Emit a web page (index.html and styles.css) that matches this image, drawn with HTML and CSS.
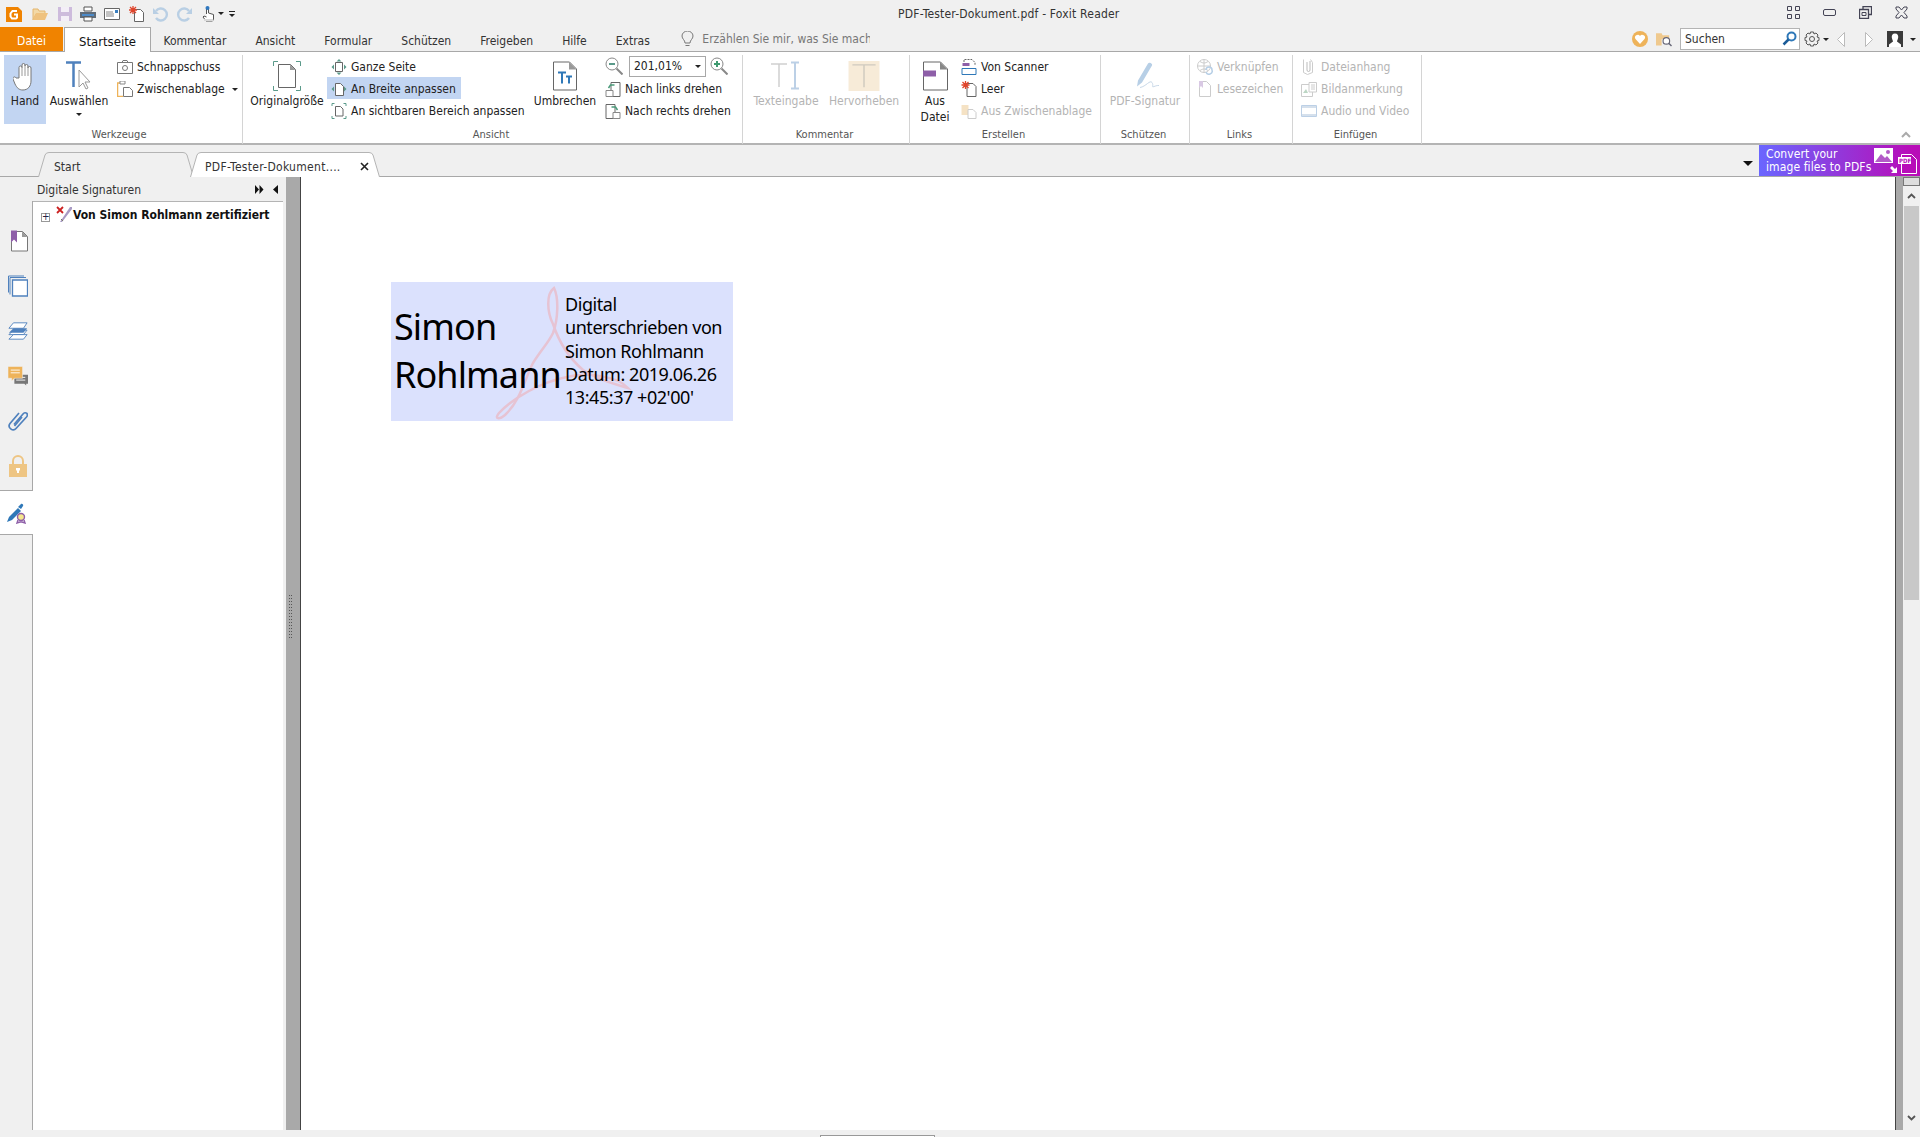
FILE: index.html
```html
<!DOCTYPE html>
<html lang="de">
<head>
    <meta charset="UTF-8">
    <meta name="viewport" content="width=device-width, initial-scale=1.0">
    <title>PDF-Tester-Dokument.pdf - Foxit Reader</title>
    <link rel="stylesheet" href="styles.css">
</head>
<body>
<div class="app">

    <!-- Titelleiste -->
    <div class="titlebar">
        <div class="qat">
            <svg class="qi q-logo" viewBox="0 0 16 16"><path d="M0 1h12l4 4v11H0z" fill="#f08300"/><path d="M11 5H6.500L4.500 7.500v3L6 12.500h4l1-1V8.500H8" fill="none" stroke="#fff" stroke-width="2"/></svg>
            <svg class="qi q-open" viewBox="0 0 16 16"><path d="M1 3h5l1 2h6v3H4L1 14z" fill="#f3d9a6" stroke="#e5b66c"/><path d="M4 7h12l-3 7H1z" fill="#efc27e"/></svg>
            <svg class="qi q-save" viewBox="0 0 16 16"><path d="M1 1h14v14H1z" fill="#cdbbdc"/><path d="M4 1h8v5H4zM4 10h8v5H4z" fill="#f3eef7"/></svg>
            <svg class="qi q-print" viewBox="0 0 16 16"><path d="M4 1h8v4H4z" fill="#fff" stroke="#555"/><path d="M0 6h16v6H0z" fill="#5f6b78"/><path d="M2 8h12v2H2z" fill="#4c8ac8"/><path d="M4 11h8v4H4z" fill="#fff" stroke="#555"/></svg>
            <svg class="qi q-mail" viewBox="0 0 16 16"><path d="M.5 2.500h15v11H.5z" fill="#fff" stroke="#666"/><path d="M2 6h7M2 8h8M2 10h8" stroke="#888"/><path d="M11 4h3v3h-3z" fill="#3a7fc0"/></svg>
            <svg class="qi q-new" viewBox="0 0 16 16"><path d="M5.500 3.500h6l3 3v9h-9z" fill="#fff" stroke="#666"/><path d="M4 0v8M0 4h8M1 1l6 6M7 1 1 7" stroke="#e0452c" stroke-width="1.300"/></svg>
            <svg class="qi q-undo" viewBox="0 0 16 16"><path d="M3 5a6 6 0 1 1 0 7" fill="none" stroke="#b9cfe4" stroke-width="2.400"/><path d="M0 2v6h6z" fill="#b9cfe4"/></svg>
            <svg class="qi q-redo" viewBox="0 0 16 16"><path d="M13 5a6 6 0 1 0 0 7" fill="none" stroke="#b9cfe4" stroke-width="2.400"/><path d="M16 2v6h-6z" fill="#b9cfe4"/></svg>
            <svg class="qi q-hand" viewBox="0 0 16 16"><path d="M5.500 8V2.500a1 1 0 0 1 2 0V7l5 1.500V13l-1 2H5l-3-4 1-1 2.500 1" fill="#fff" stroke="#555"/><circle cx="6.500" cy="2" r="2" fill="#2f78c0"/><path d="M3 13h9v2H3z" fill="#d8d8d8"/></svg>
            <span class="caret q-caret"></span>
            <span class="q-custom"></span>
        </div>
        <div class="doc-title">PDF-Tester-Dokument.pdf - Foxit Reader</div>
        <div class="winbtns">
            <svg class="wi" viewBox="0 0 13 13"><path d="M.5.500h4v4h-4zM8.500.500h4v4h-4zM.5 8.500h4v4h-4zM8.500 8.500h4v4h-4z" fill="none" stroke="#445"/></svg>
            <svg class="wi" viewBox="0 0 13 13"><rect x=".5" y="3.500" width="12" height="6" rx="1.500" fill="none" stroke="#445"/></svg>
            <svg class="wi" viewBox="0 0 13 13"><path d="M4 3V.5h8.500v8H10M.5 3.500H9.500v9h-9z" fill="none" stroke="#445" stroke-width="1.300"/><path d="M3 6.500h4v3H3z" fill="none" stroke="#445"/></svg>
            <svg class="wi" viewBox="0 0 13 13"><path d="M1 1h3l2.500 3L9 1h3v2L9 6.500l3 3.500v2H9L6.500 9 4 12H1v-2l3-3.500L1 3z" fill="none" stroke="#445"/></svg>
        </div>
    </div>

    <!-- Registerkarten -->
    <div class="tabbar">
        <div class="tab tab-file">Datei</div>
        <div class="tab tab-active">Startseite</div>
        <div class="tab">Kommentar</div>
        <div class="tab">Ansicht</div>
        <div class="tab">Formular</div>
        <div class="tab">Schützen</div>
        <div class="tab">Freigeben</div>
        <div class="tab">Hilfe</div>
        <div class="tab">Extras</div>
        <svg class="bulb" viewBox="0 0 13 17"><path d="M4 12c0-3-3-4-3-7a5.500 5 0 0 1 11 0c0 3-3 4-3 7zM4.500 14.500h4" fill="none" stroke="#777"/></svg>
        <div class="tell">Erzählen Sie mir, was Sie mache</div>
        <div class="tab-tools">
            <svg class="ti" viewBox="0 0 16 16"><circle cx="8" cy="8" r="8" fill="#eeb35a"/><path d="M8 13 3.500 8a2.500 2.500 0 0 1 4.500-3 2.500 2.500 0 0 1 4.500 3z" fill="#fff"/></svg>
            <svg class="ti" viewBox="0 0 17 16"><path d="M0 2h6l1 2h7v4H6v7H0z" fill="#efc98e"/><circle cx="11" cy="10" r="3.500" fill="#fff" stroke="#667" stroke-width="1.200"/><path d="m13.500 12.500 3 3" stroke="#667" stroke-width="1.500"/></svg>
            <div class="search">Suchen
                <svg class="search-icon" viewBox="0 0 15 15"><circle cx="9.500" cy="5.500" r="4" fill="#fff" stroke="#2f78b8" stroke-width="2"/><path d="m6.500 8.500-5 5" stroke="#1c5c98" stroke-width="2.500"/></svg>
            </div>
            <svg class="ti gear" viewBox="0 0 16 16"><circle cx="8" cy="8" r="2.500" fill="none" stroke="#555"/><path d="M6.500 1h3l.5 2 2-1 2 2-1 2 2 .5v3l-2 .5 1 2-2 2-2-1-.5 2h-3L6 13l-2 1-2-2 1-2-2-.5v-3L3 6 2 4l2-2 2 1z" fill="none" stroke="#555"/></svg>
            <span class="caret"></span>
            <svg class="nav nav-back" viewBox="0 0 8 15"><path d="M7.500.5v14L.5 7.500z" fill="#fff" stroke="#bbb"/></svg>
            <svg class="nav nav-next" viewBox="0 0 8 15"><path d="M.5.5v14l7-7z" fill="#fff" stroke="#bbb"/></svg>
            <svg class="ti user" viewBox="0 0 16 16"><path d="M0 0h16v16H0z" fill="#3a3a3a"/><path d="M8 2.500c2.500 0 3.500 2 3.200 4-.3 2-1.200 3-1.200 4l4 3v2.500H2V13.500l4-3c0-1-.9-2-1.200-4-.3-2 .7-4 3.200-4z" fill="#fff"/></svg>
            <span class="caret"></span>
        </div>
    </div>

    <!-- Menüband -->
    <div class="ribbon">
        <section class="group g-tools">
            <div class="group-body">
                <div class="big big-on b-hand">
                    <svg class="big-icon" width="24" height="30" viewBox="0 0 24 30"><path d="M6 17V6.500a1.500 1.500 0 0 1 3 0V4a1.500 1.500 0 0 1 3 0v1a1.500 1.500 0 0 1 3 0v2a1.500 1.500 0 0 1 3 0v13c0 5-3 9-8 9-4 0-6-2-8-6l-2-5c-.5-2 2-3 3-1z" fill="#fff" stroke="#777"/><path d="M9 6v9M12 4v11M15 5v10" stroke="#999"/></svg>
                    <span>Hand</span>
                </div>
                <div class="big b-select">
                    <svg class="big-icon" width="26" height="30" viewBox="0 0 26 30"><path d="M0 1.500h15M7.500 1.500V26" stroke="#4f81bd" stroke-width="2.500"/><path d="M13 9v17l4-4 3 6 2-1-3-6h5z" fill="#fff" stroke="#999"/></svg>
                    <span>Auswählen</span>
                    <span class="caret big-caret"></span>
                </div>
                <div class="rows r-tools">
                    <div class="row"><svg class="si" viewBox="0 0 16 14"><path d="M.5 2.500h15v11H.5zM5 2.500l1-2h4l1 2" fill="#fff" stroke="#777"/><circle cx="8" cy="8" r="2.500" fill="none" stroke="#777"/></svg>Schnappschuss</div>
                    <div class="row"><svg class="si" viewBox="0 0 16 16"><path d="M6 2H.5v13.500H6" fill="none" stroke="#eeb35a" stroke-width="1.500"/><path d="M3 0h5v3H3z" fill="#fff" stroke="#888"/><path d="M6.500 6.500h6l3 3v6h-9z" fill="#fff" stroke="#777"/></svg>Zwischenablage<span class="caret row-caret"></span></div>
                </div>
            </div>
            <div class="group-label">Werkzeuge</div>
        </section>

        <section class="group g-view">
            <div class="group-body">
                <div class="big b-orig">
                    <svg class="big-icon" width="28" height="30" viewBox="0 0 28 30"><path d="M.5 5V.5H5M23 .5h4.500V5M.5 25v4.500H5M23 29.500h4.500V25" fill="none" stroke="#5b9a8a"/><path d="M5.500 3.500h12l5 5v18h-17z" fill="#fff" stroke="#666"/><path d="M17 3.500l5.500 5.500H17z" fill="#999"/></svg>
                    <span>Originalgröße</span>
                </div>
                <div class="rows r-view">
                    <div class="row"><svg class="si" viewBox="0 0 15 16"><path d="M4 3.500h7v9H4z" fill="#fff" stroke="#666"/><path d="M7.500 0 5 2.500h5zM7.500 16 5 13.500h5zM0 8l2.500-2.500v5zM15 8l-2.500-2.500v5z" fill="#5b9a8a"/></svg>Ganze Seite</div>
                    <div class="row row-on"><svg class="si" viewBox="0 0 15 16"><path d="M4 2.500h5l3 3v9H4z" fill="#fff" stroke="#666"/><path d="M0 8l2.500-2.500v5zM15 8l-2.500-2.500v5z" fill="#5b9a8a"/></svg>An Breite anpassen</div>
                    <div class="row"><svg class="si" viewBox="0 0 15 16"><path d="M.5 3V.5H3M12 .5h2.500V3M.5 13v2.500H3M12 15.500h2.500V13" fill="none" stroke="#5b9a8a"/><path d="M4 3.500h5l2.500 2.500v7H4z" fill="#fff" stroke="#666"/></svg>An sichtbaren Bereich anpassen</div>
                </div>
                <div class="big b-wrap">
                    <svg class="big-icon" width="24" height="29" viewBox="0 0 24 29"><path d="M.5.500h16l7 7v21H.5z" fill="#fff" stroke="#666"/><path d="M16 .5l7.500 7.500H16z" fill="#999"/><path d="M5 11h8M9 11v11M13 15h6M16 15v7" stroke="#2f78b8" stroke-width="2" fill="none"/></svg>
                    <span>Umbrechen</span>
                </div>
                <div class="rows r-zoom">
                    <div class="row zoom-row">
                        <svg class="zi" viewBox="0 0 18 18"><circle cx="7" cy="7" r="6" fill="#fff" stroke="#888"/><path d="M4 7h6" stroke="#5b9a8a" stroke-width="2"/><path d="m11.500 11.500 6 6" stroke="#888" stroke-width="2"/></svg>
                        <div class="zoom-box">201,01%<span class="caret"></span></div>
                        <svg class="zi" viewBox="0 0 18 18"><circle cx="7" cy="7" r="6" fill="#fff" stroke="#888"/><path d="M4 7h6M7 4v6" stroke="#3f9a70" stroke-width="2"/><path d="m11.500 11.500 6 6" stroke="#888" stroke-width="2"/></svg>
                    </div>
                    <div class="row"><svg class="si" viewBox="0 0 15 16"><path d="M5.500 1.500h9v14h-9z" fill="#fff" stroke="#666"/><path d="M.5 9.500h7v6h-7z" fill="#fff" stroke="#888"/><path d="M9 4H5L3 7" fill="none" stroke="#4a9a7a" stroke-width="1.500"/></svg>Nach links drehen</div>
                    <div class="row"><svg class="si" viewBox="0 0 15 16"><path d="M.5 1.500h9v14h-9z" fill="#fff" stroke="#666"/><path d="M7.500 9.500h7v6h-7z" fill="#fff" stroke="#888"/><path d="M6 4h4l2 3" fill="none" stroke="#4a9a7a" stroke-width="1.500"/></svg>Nach rechts drehen</div>
                </div>
            </div>
            <div class="group-label">Ansicht</div>
        </section>

        <section class="group g-comment">
            <div class="group-body">
                <div class="big off b-text">
                    <svg class="big-icon" width="30" height="30" viewBox="0 0 30 30"><path d="M0 3h16M8 3v23" stroke="#cfcfcf" stroke-width="1.500"/><path d="M20 1.500h8M20 27.500h8M24 1.500v26" stroke="#bcd0e6" stroke-width="2"/></svg>
                    <span>Texteingabe</span>
                </div>
                <div class="big off b-mark">
                    <svg class="big-icon" width="32" height="31" viewBox="0 0 32 31"><path d="M0 0h32v31H0z" fill="#f7ebd8"/><path d="M4 4h24M16 4v23" stroke="#cfcabf" stroke-width="1.500"/></svg>
                    <span>Hervorheben</span>
                </div>
            </div>
            <div class="group-label">Kommentar</div>
        </section>

        <section class="group g-create">
            <div class="group-body">
                <div class="big b-file">
                    <svg class="big-icon" width="25" height="29" viewBox="0 0 25 29"><path d="M.5.500h17l7 7v21H.5z" fill="#fff" stroke="#666"/><path d="M17 .5l7.500 7.500H17z" fill="#888"/><path d="M0 9h13v6H0z" fill="#8e5fa8"/></svg>
                    <span>Aus<br>Datei</span>
                </div>
                <div class="rows r-create">
                    <div class="row"><svg class="si" viewBox="0 0 15 16"><path d="M2.500 6V.5h8l3 3V6" fill="none" stroke="#666" stroke-dasharray="2 1"/><path d="M1 4h7v3H1z" fill="#8e5fa8"/><path d="M.5 9.500h14v6H.5z" fill="#fff" stroke="#2f78b8"/></svg>Von Scanner</div>
                    <div class="row"><svg class="si" viewBox="0 0 15 16"><path d="M5.500 2.500h6l3 3v10h-9z" fill="#fff" stroke="#666"/><path d="M4 0v8M0 4h8M1 1l6 6M7 1 1 7" stroke="#e0452c" stroke-width="1.300"/></svg>Leer</div>
                    <div class="row off"><svg class="si" viewBox="0 0 15 16"><path d="M0 2h7v10H0z" fill="#f5e2c4"/><path d="M6.500 6.500h5l3 3v6h-8z" fill="#fff" stroke="#ccc"/></svg>Aus Zwischenablage</div>
                </div>
            </div>
            <div class="group-label">Erstellen</div>
        </section>

        <section class="group g-protect">
            <div class="group-body">
                <div class="big off b-sign">
                    <svg class="big-icon" width="27" height="29" viewBox="0 0 27 29"><path d="M6 19 16 2c1-2 5 0 4 2L10 21l-5 4z" fill="#b7cfe6"/><path d="M8 26c6-1 10-8 12-5s-1 5 2 4 3-1 5-1" fill="none" stroke="#c8d8e8"/></svg>
                    <span>PDF-Signatur</span>
                </div>
            </div>
            <div class="group-label">Schützen</div>
        </section>

        <section class="group g-links">
            <div class="group-body">
                <div class="rows r-links">
                    <div class="row off"><svg class="si" viewBox="0 0 16 16"><circle cx="7" cy="7" r="6.500" fill="none" stroke="#ccc"/><path d="M.5 7h13M7 .5v13M3 2.500c3 2 5 2 8 0M3 11.500c3-2 5-2 8 0" fill="none" stroke="#ccc"/><path d="M9 11a3 3 0 0 1 6 0 3 3 0 0 1-6 2" fill="none" stroke="#b7cfe6" stroke-width="1.500"/></svg>Verknüpfen</div>
                    <div class="row off"><svg class="si" viewBox="0 0 16 16"><path d="M2.500.5h7l4 4v11h-11z" fill="#fff" stroke="#ccc"/><path d="M2 0h4v7L4 5 2 7z" fill="#d9c9e4"/></svg>Lesezeichen</div>
                </div>
            </div>
            <div class="group-label">Links</div>
        </section>

        <section class="group g-insert">
            <div class="group-body">
                <div class="rows r-insert">
                    <div class="row off"><svg class="si" viewBox="0 0 16 16"><path d="M2.500.5v13l4 2 5-2V3.500l-2-3" fill="none" stroke="#ccc"/><path d="M6 3v8a1.500 1.500 0 0 0 3 0V2" fill="none" stroke="#bbb"/></svg>Dateianhang</div>
                    <div class="row off"><svg class="si" viewBox="0 0 16 16"><path d="M.5 3.500h11v12H.5z" fill="#fff" stroke="#ccc"/><path d="M2 12l3-4 2 4z" fill="#bcd6c4"/><path d="M8 1.500h7.500V11H8z" fill="#fff" stroke="#ccc"/><path d="M10 4h4M10 6h4M10 8h4" stroke="#ccc"/></svg>Bildanmerkung</div>
                    <div class="row off"><svg class="si" viewBox="0 0 16 16"><path d="M.5 2.500h15v11H.5z" fill="#fff" stroke="#bcd0e6"/><path d="M1 3h14v2H1zM1 11h14v2H1z" fill="#d5e0ec"/></svg>Audio und Video</div>
                </div>
            </div>
            <div class="group-label">Einfügen</div>
        </section>

        <svg class="collapse" viewBox="0 0 10 7"><path d="M1 6l4-4 4 4" fill="none" stroke="#aaa" stroke-width="2"/></svg>
    </div>

    <!-- Dokument-Reiter -->
    <div class="docbar">
        <div class="doc-tab dt-start">
            <svg class="dt-shape" viewBox="0 0 156 25" preserveAspectRatio="none"><path d="M.5 25 7 3Q8 .5 11 .5H145Q148 .5 149 3L155.500 25" fill="#f0f0f0" stroke="#b4b4b4"/></svg>
            <span class="dt-text">Start</span>
        </div>
        <div class="doc-tab dt-on">
            <svg class="dt-shape" viewBox="0 0 190 25" preserveAspectRatio="none"><path d="M.5 25 7 3Q8 .5 11 .5H179Q182 .5 183 3L189.500 25" fill="#fff" stroke="#b4b4b4"/></svg>
            <span class="dt-text">PDF-Tester-Dokument....</span>
            <svg class="dt-close" viewBox="0 0 9 9"><path d="M1 1l7 7M8 1 1 8" stroke="#222" stroke-width="1.600"/></svg>
        </div>
        <span class="caret doc-caret"></span>
        <div class="convert">
            <div class="convert-text">Convert your<br>image files to PDFs</div>
            <svg class="convert-icon" width="46" height="28" viewBox="0 0 46 28"><path d="M0 1h19v15H0z" fill="#fff"/><path d="M1 15l6-8 4 4 2-2 5 6z" fill="#b35ac8"/><circle cx="14" cy="5" r="2" fill="#b35ac8"/><path d="M27.500 7.500h10l5 5v14h-15z" fill="#b80db8" stroke="#fff"/><path d="M24 10h13v7H24z" fill="#fff"/><text class="pdf-mark" x="25" y="16">PDF</text><path d="M18 19l3 3 2-2v6h-6l2-2-3-3z" fill="#fff"/></svg>
        </div>
    </div>

    <!-- Hauptbereich -->
    <div class="main">
        <div class="rail">
            <svg class="ri" viewBox="0 0 20 21"><path d="M3.500 1h11l5 5v14.500H3.500z" fill="#fff" stroke="#777"/><path d="M14 1l5.500 5.500H14z" fill="#999"/><path d="M3 0h6v12l-3-3-3 3z" fill="#8e5fa8"/></svg>
            <svg class="ri" viewBox="0 0 20 21"><path d="M.5 17V.5H16" fill="none" stroke="#4f81bd"/><path d="M2 19V2h16" fill="none" stroke="#4f81bd"/><path d="M4.500 4.500h15v16h-15z" fill="#fff" stroke="#4f81bd" stroke-width="1.300"/></svg>
            <svg class="ri" viewBox="0 0 22 20"><path d="M1 14h16l4-5H6z" fill="#fff" stroke="#4f81bd"/><path d="M1 19h16l4-5H6z" fill="#fff" stroke="#4f81bd"/><path d="M1 7h16l4-6H6z" fill="#fff" stroke="#4f81bd"/><path d="M1 12h16l4-5H6z" fill="#4f81bd"/></svg>
            <svg class="ri" viewBox="0 0 22 21"><path d="M7 9h15v10h-2v2l-2-2H7z" fill="#777"/><path d="M9 12h10M9 15h10" stroke="#fff"/><path d="M0 0h16v13H7l-3 3v-3H0z" fill="#eeb35a" stroke="#f0f0f0" stroke-width=".6"/><path d="M3 4h10M3 7h10" stroke="#fff"/></svg>
            <svg class="ri" viewBox="0 0 20 21"><path d="M6 14 15 3.500c2.500-3 6 0 3.500 3L8 18c-3 3.500-9-1-6-5l9-10.500" fill="none" stroke="#4f81bd" stroke-width="1.700"/><path d="M6.500 15.500 14 6.500" stroke="#4f81bd" stroke-width="1.700"/></svg>
            <svg class="ri" viewBox="0 0 18 22"><path d="M4 9V6a5 5 0 0 1 10 0v3" fill="none" stroke="#eec583" stroke-width="2"/><path d="M0 9h18v13H0z" fill="#eec583"/><path d="M7 13h4v2l-1 1v2H8v-2l-1-1z" fill="#fff"/></svg>
            <div class="rail-on">
                <svg class="ri" viewBox="0 0 20 20"><path d="M0 19l2-5L11 5l3 3-9 9z" fill="#2f78b8"/><path d="M11 4l3-3c1-1 3 1 2 2l-2 3z" fill="#2f78b8"/><circle cx="14" cy="14" r="3.500" fill="#f5e68c" stroke="#8e5fa8" stroke-width="1.400"/><path d="M11 17l-1 3 3-1h2l3 1-1-3" fill="none" stroke="#8e5fa8" stroke-width="1.400"/></svg>
            </div>
        </div>

        <aside class="panel">
            <div class="panel-head">
                <span>Digitale Signaturen</span>
                <svg class="panel-btn" width="9" height="9" viewBox="0 0 9 9"><path d="M0 0l4 4.500L0 9zM4.500 0l4 4.500-4 4.500z" fill="#111"/></svg>
                <svg class="panel-btn" width="5" height="9" viewBox="0 0 5 9"><path d="M5 0v9L0 4.500z" fill="#111"/></svg>
            </div>
            <div class="panel-body">
                <div class="tree-row">
                    <span class="plus"></span>
                    <svg class="sig-icon" viewBox="0 0 16 16"><path d="M4 16 14 1h2v2L6 16z" fill="#a89ac4"/><path d="M5 13l2 2" stroke="#776"/><path d="M1 1l6 6M7 1 1 7" stroke="#c22" stroke-width="1.800"/></svg>
                    <span class="tree-text">Von Simon Rohlmann zertifiziert</span>
                </div>
            </div>
        </aside>

        <div class="splitter"></div>

        <div class="page">
            <div class="sig-box">
                <svg class="sig-logo" width="342" height="139" viewBox="0 0 342 139"><path d="M163 6C155 12 156 30 162 42 168 60 178 76 192 88 206 98 224 102 237 106 226 94 196 90 176 95 150 100 122 116 108 131 103 137 108 138 114 133 130 118 134 96 142 81 150 68 158 60 162 51 167 38 168 16 163 6z" fill="none" stroke="#e6c3d3" stroke-width="2.500"/></svg>
                <div class="sig-name">Simon<br>Rohlmann</div>
                <div class="sig-info">Digital<br>unterschrieben von<br>Simon Rohlmann<br>Datum: 2019.06.26<br>13:45:37 +02'00'</div>
            </div>
        </div>

        <div class="splitter-right"></div>

        <div class="scrollbar">
            <div class="sb-split"></div>
            <svg class="sb-arrow" viewBox="0 0 9 6"><path d="M1 5l3.500-3.500L8 5" fill="none" stroke="#555" stroke-width="1.800"/></svg>
            <div class="sb-thumb"></div>
            <svg class="sb-arrow sb-down" viewBox="0 0 9 6"><path d="M1 1l3.500 3.500L8 1" fill="none" stroke="#555" stroke-width="1.800"/></svg>
        </div>
    </div>

    <div class="statusbar"><div class="thumb-tab"></div></div>
</div>
</body>
</html>
```

FILE: styles.css
```css
* {
    box-sizing: border-box;
}
html, body {
    margin: 0;
    height: 100%;
}
body {
    font-family: "DejaVu Sans Condensed", "DejaVu Sans", sans-serif;
    font-stretch: condensed;
    font-size: 12px;
    color: #222;
    background-color: #f0f0f0;
    overflow: hidden;
}
svg {
    display: block;
    flex: none;
}
.app {
    display: flex;
    flex-direction: column;
    height: 1137px;
}
.caret {
    display: inline-block;
    flex: none;
    width: 0;
    height: 0;
    border-left: 3px solid transparent;
    border-right: 3px solid transparent;
    border-top: 3px solid #222;
}

/* title bar */
.titlebar {
    display: flex;
    align-items: center;
    height: 27px;
    flex: none;
}
.qat {
    display: flex;
    align-items: center;
    width: 898px;
    padding-left: 6px;
}
.qi {
    width: 16px;
    height: 16px;
    margin-right: 8px;
}
.q-logo { margin-right: 10px; }
.q-open { margin-right: 9px; }
.q-save { margin-right: 7px; }
.q-mail { margin-right: 9px; }
.q-undo { margin-right: 7px; }
.q-redo { margin-right: 9px; }
.q-hand { margin-right: 1px; }
.q-caret { margin-right: 5px; }
.q-custom {
    width: 6px;
    height: 6px;
    border-top: 1px solid #222;
    position: relative;
}
.q-custom::after {
    content: "";
    position: absolute;
    left: 0;
    top: 2px;
    border-left: 3px solid transparent;
    border-right: 3px solid transparent;
    border-top: 3px solid #222;
}
.doc-title {
    flex: 1;
    color: #333;
    letter-spacing: .2px;
}
.winbtns {
    display: flex;
    gap: 23px;
    padding-right: 12px;
    margin-top: -3px;
}
.wi {
    width: 13px;
    height: 13px;
}

/* ribbon tabs */
.tabbar {
    display: flex;
    align-items: center;
    height: 25px;
    flex: none;
    position: relative;
    border-bottom: 1px solid #a8a8a8;
}
.tab {
    height: 24px;
    line-height: 29px;
    padding: 0 14.500px;
    color: #333;
    white-space: nowrap;
}
.tab-file {
    width: 63px;
    padding: 0;
    text-align: center;
    color: #fff;
    background-color: #f08300;
    margin-right: 1px;
}
.tab-active {
    width: 87px;
    height: 25px;
    padding: 0;
    text-align: center;
    font-size: 13px;
    line-height: 28px;
    color: #111;
    background-color: #fff;
    border: 1px solid #a8a8a8;
    border-bottom: none;
    margin-top: 1px;
    margin-right: -2px;
    position: relative;
    z-index: 1;
}
.bulb {
    width: 13px;
    height: 17px;
    margin-left: 17px;
}
.tell {
    width: 168px;
    margin-left: 8px;
    overflow: hidden;
    white-space: nowrap;
    line-height: 29px;
    color: #777;
}
.tab-tools {
    display: flex;
    align-items: center;
    margin-left: auto;
    padding-right: 4px;
}
.ti {
    width: 16px;
    height: 16px;
    margin-right: 8px;
}
.search {
    position: relative;
    width: 120px;
    height: 22px;
    line-height: 20px;
    padding-left: 4px;
    background-color: #fff;
    border: 1px solid #b4b4b4;
    margin-right: 4px;
    color: #333;
}
.search-icon {
    position: absolute;
    right: 2px;
    top: 2px;
    width: 15px;
    height: 15px;
}
.gear { margin-right: 3px; }
.nav {
    width: 8px;
    height: 15px;
}
.nav-back { margin-left: 8px; }
.nav-next { margin-left: 20px; margin-right: 14px; }
.user { margin-right: 7px; }

/* ribbon */
.ribbon {
    display: flex;
    height: 93px;
    flex: none;
    position: relative;
    background-color: #fff;
    border-bottom: 2px solid #b4b4b4;
}
.group {
    display: flex;
    flex-direction: column;
    flex: none;
    height: 89px;
    margin-top: 3px;
    border-right: 1px solid #d4d4d4;
}
.group-body {
    flex: 1;
    display: flex;
    position: relative;
}
.group-label {
    height: 20px;
    line-height: 22px;
    padding-right: 3px;
    text-align: center;
    font-size: 11px;
    color: #555;
}
.g-tools { width: 243px; padding-left: 4px; }
.g-tools .group-label { padding-right: 8px; }
.g-view { width: 500px; }
.g-comment { width: 167px; }
.g-create { width: 191px; }
.g-protect { width: 89px; }
.g-links { width: 103px; }
.g-insert { width: 129px; }

.big {
    display: flex;
    flex-direction: column;
    align-items: center;
    flex: none;
    height: 69px;
    padding-top: 6px;
    line-height: 16px;
    text-align: center;
    white-space: nowrap;
}
.big-icon {
    margin-bottom: 2px;
    height: 30px;
}
.big-on {
    background-color: #c2d5f2;
}
.big-caret {
    margin-top: 4px;
}
.off {
    color: #b4b4b4;
}
.b-hand { width: 42px; }
.b-select { width: 60px; margin-left: 3px; }
.b-orig { width: 72px; margin-left: 8px; }
.b-wrap { width: 64px; margin-left: 9px; }
.b-text { width: 70px; margin-left: 8px; }
.b-mark { width: 72px; margin-left: 7px; }
.b-file { width: 36px; margin-left: 7px; }
.b-sign { width: 72px; margin-left: 8px; }

.rows {
    display: flex;
    flex-direction: column;
    flex: none;
}
.row {
    display: flex;
    align-items: center;
    height: 22px;
    padding-top: 2px;
    padding-left: 4px;
    white-space: nowrap;
}
.si {
    width: 16px;
    height: 16px;
    margin-right: 4px;
}
.row-on {
    background-color: #c2d5f2;
}
.row-caret { margin-left: 7px; }
.r-tools { margin-left: 4px; }
.r-view { margin-left: 4px; width: 197px; }
.r-view .row-on { width: 134px; }
.r-zoom { margin-left: 4px; }
.zoom-row { padding-top: 0; }
.zi {
    width: 18px;
    height: 18px;
}
.zoom-box {
    display: flex;
    align-items: center;
    justify-content: space-between;
    width: 77px;
    height: 21px;
    margin: 0 4px 0 6px;
    padding: 0 4px;
    border: 1px solid #a8a8a8;
    background-color: #fff;
}
.r-create { margin-left: 4px; }
.r-links { margin-left: 3px; }
.r-insert { margin-left: 4px; }

.collapse {
    position: absolute;
    right: 9px;
    bottom: 5px;
    width: 10px;
    height: 7px;
}

/* document tabs */
.docbar {
    display: flex;
    align-items: flex-end;
    height: 32px;
    flex: none;
    position: relative;
    border-bottom: 1px solid #a8a8a8;
    padding-left: 38px;
}
.doc-tab {
    position: relative;
    height: 25px;
    line-height: 31px;
    margin-bottom: -1px;
    flex: none;
}
.dt-start { width: 156px; }
.dt-on { width: 190px; margin-left: -4px; }
.dt-on .dt-text {
    margin-left: 15px;
    letter-spacing: .3px;
}
.dt-shape {
    position: absolute;
    left: 0;
    top: 0;
    width: 100%;
    height: 100%;
}
.dt-text {
    position: relative;
    margin-left: 16px;
    color: #333;
}
.dt-close {
    position: absolute;
    left: 170px;
    top: 10px;
    width: 9px;
    height: 9px;
}
.doc-caret {
    margin-left: auto;
    margin-right: 6px;
    margin-bottom: 10px;
    border-left-width: 5px;
    border-right-width: 5px;
    border-top-width: 5px;
    border-top-color: #111;
}
.convert {
    display: flex;
    align-items: center;
    justify-content: space-between;
    width: 161px;
    height: 31px;
    padding: 0 0 0 7px;
    color: #fff;
    line-height: 13px;
    background: linear-gradient(to right, #6a66ff, #b80db8 95%);
}
.convert-text {
    white-space: nowrap;
    letter-spacing: .1px;
}
.pdf-mark {
    font-size: 6px;
    font-weight: bold;
    fill: #b80db8;
}

/* main area */
.main {
    display: flex;
    flex: 1;
    min-height: 0;
}
.rail {
    position: relative;
    width: 33px;
    flex: none;
    display: flex;
    flex-direction: column;
    align-items: center;
    padding-top: 29px;
    gap: 23px;
    border-right: 1px solid #a8a8a8;
    margin-top: 24px;
}
.ri {
    width: 20px;
    height: 22px;
}
.rail > .ri {
    margin-left: 3px;
}
.rail-on {
    display: flex;
    align-items: center;
    justify-content: center;
    width: 33px;
    height: 45px;
    margin-top: -10px;
    margin-right: -1px;
    background-color: #fff;
    border-top: 1px solid #a8a8a8;
    border-bottom: 1px solid #a8a8a8;
}
.panel {
    display: flex;
    flex-direction: column;
    width: 251px;
    flex: none;
    margin-left: -1px;
}
.panel-head {
    display: flex;
    align-items: center;
    height: 25px;
    padding: 0 5px;
    color: #333;
    border-bottom: 1px solid #b4b4b4;
}
.panel-head span {
    flex: 1;
    padding-top: 2px;
}
.panel-btn { margin-left: 9px; }
.panel-body {
    flex: 1;
    background-color: #fff;
}
.tree-row {
    display: flex;
    align-items: center;
    padding: 5px 0 0 9px;
    height: 21px;
}
.plus {
    position: relative;
    width: 9px;
    height: 9px;
    border: 1px solid #999;
    margin-top: 4px;
    flex: none;
}
.plus::after {
    content: "+";
    position: absolute;
    left: 0;
    top: -4px;
    width: 7px;
    text-align: center;
    font-size: 10px;
    line-height: 14px;
    color: #224;
}
.sig-icon {
    width: 16px;
    height: 16px;
    margin: -3px 1px 0 6px;
}
.tree-text {
    font-weight: bold;
    color: #111;
    white-space: nowrap;
}
.splitter {
    position: relative;
    width: 18px;
    flex: none;
    background-color: #a9a9a9;
    border-left: 3px solid #f0f0f0;
    border-right: 1px solid #444;
}
/* grip dots */
.splitter::before, .splitter::after {
    content: "";
    position: absolute;
    top: 418px;
    width: 1px;
    height: 44px;
    background: repeating-linear-gradient(to bottom, #555 0 1px, transparent 1px 3px);
}
.splitter::before { left: 3px; }
.splitter::after { left: 5px; }
.page {
    flex: 1;
    background-color: #fff;
    padding: 105px 0 0 90px;
}
.sig-box {
    position: relative;
    display: flex;
    align-items: flex-start;
    width: 342px;
    height: 139px;
    background-color: #dbe1fd;
    color: #000;
    font-family: "Noto Sans", sans-serif;
    font-stretch: normal;
}
.sig-logo {
    position: absolute;
    left: 0;
    top: 0;
}
.sig-name {
    position: relative;
    width: 174px;
    padding: 21px 0 0 3px;
    font-size: 36px;
    line-height: 48px;
    letter-spacing: -.9px;
}
.sig-info {
    position: relative;
    padding-top: 11px;
    font-size: 18px;
    line-height: 23.300px;
    letter-spacing: -.45px;
    white-space: nowrap;
}
.splitter-right {
    width: 8px;
    flex: none;
    background-color: #a9a9a9;
    border-left: 1px solid #444;
}
.scrollbar {
    display: flex;
    flex-direction: column;
    align-items: center;
    width: 17px;
    flex: none;
    background-color: #f0f0f0;
    padding-bottom: 2px;
}
.sb-split {
    width: 17px;
    height: 9px;
    background-color: #ddd;
    border: 1px solid #777;
}
.sb-arrow {
    width: 9px;
    height: 6px;
    margin: 7px 0;
}
.sb-down {
    margin-top: auto;
}
.sb-thumb {
    width: 15px;
    height: 394px;
    background-color: #c8c8c8;
}

.statusbar {
    height: 7px;
    flex: none;
    position: relative;
    padding: 5px 0 0 820px;
    overflow: hidden;
}
.thumb-tab {
    width: 115px;
    height: 4px;
    background-color: #fff;
    border: 1px solid #999;
}
```
